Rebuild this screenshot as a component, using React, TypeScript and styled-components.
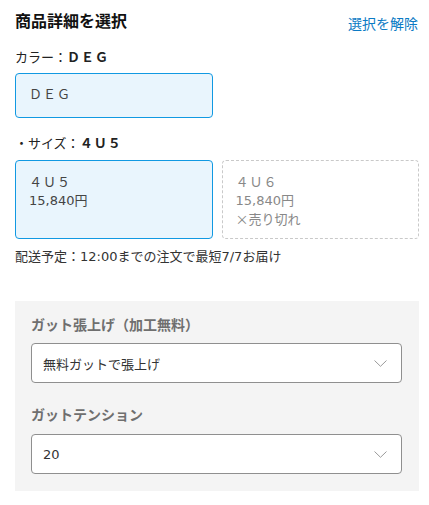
import React from "react";
import styled, { createGlobalStyle } from "styled-components";

const Global = createGlobalStyle`
  html, body { margin: 0; padding: 0; background: #fff; }
  body { font-family: "DejaVu Sans", "Noto Sans CJK JP", sans-serif; color: #222; }
  * { box-sizing: border-box; }
`;

const Page = styled.div`
  width: 429px;
  padding: 11px 10px 14px 15px;
`;

const Header = styled.div`
  display: flex;
  justify-content: space-between;
  align-items: center;
  height: 22px;
`;

const Title = styled.h2`
  margin: 0;
  font-size: 16px;
  line-height: 22px;
  font-weight: 700;
  color: #111;
`;

const ClearLink = styled.a`
  font-size: 14px;
  line-height: 22px;
  color: #0b7ac4;
  text-decoration: none;
  margin-right: 1px;
  padding-top: 3px;
`;

const FieldLabel = styled.div<{ $top: number }>`
  margin-top: ${(p) => p.$top}px;
  font-size: 13px;
  line-height: 20px;
  height: 20px;
  color: #222;
  b { font-weight: 700; letter-spacing: 1px; }
`;

const OptionGrid = styled.div<{ $cols: number; $top: number }>`
  display: grid;
  grid-template-columns: repeat(${(p) => p.$cols}, 1fr);
  column-gap: 9px;
  margin-top: ${(p) => p.$top}px;
`;

const OptionBox = styled.div<{ $selected?: boolean; $soldOut?: boolean; $h: number }>`
  height: ${(p) => p.$h}px;
  border-radius: 4px;
  border: 1px ${(p) => (p.$soldOut ? "dashed #c9c9c9" : "solid #1199e2")};
  background: ${(p) => (p.$selected ? "#e9f5fd" : "#fff")};
  padding: ${(p) => (p.$h < 50 ? "12px 13px" : "13px 13px")};
  color: ${(p) => (p.$soldOut ? "#888" : "#444")};
  font-size: 13px;
  line-height: 18px;
`;

const OptionName = styled.div`
  letter-spacing: 1px;
`;

const CrossMark = styled.span`
  font-family: "Noto Sans CJK JP", sans-serif;
`;

const Delivery = styled.div`
  margin-top: 9px;
  font-size: 13px;
  line-height: 18px;
  color: #333;
`;

const Panel = styled.div`
  margin-top: 35px;
  background: #f4f4f4;
  padding: 14px 17px 17px 16px;
`;

const PanelLabel = styled.div<{ $top: number }>`
  margin-top: ${(p) => p.$top}px;
  font-size: 14px;
  line-height: 20px;
  height: 20px;
  font-weight: 700;
  color: #6f6f6f;
`;

const SelectBox = styled.div<{ $top: number }>`
  margin-top: ${(p) => p.$top}px;
  height: 40px;
  background: #fff;
  border: 1px solid #8f8f8f;
  border-radius: 4px;
  display: flex;
  align-items: center;
  justify-content: space-between;
  padding: 0 14px 0 11px;
  font-size: 13px;
  color: #333;
`;

const Chevron = () => (
  <svg width="13" height="7" viewBox="0 0 13 7" fill="none">
    <path d="M0.5 0.5 L6.5 6.3 L12.5 0.5" stroke="#9a9a9a" strokeWidth="1" />
  </svg>
);

export default function App() {
  return (
    <Page>
      <Global />
      <Header>
        <Title>商品詳細を選択</Title>
        <ClearLink href="#">選択を解除</ClearLink>
      </Header>

      <FieldLabel $top={15}>
        カラー：<b>ＤＥＧ</b>
      </FieldLabel>
      <OptionGrid $cols={2} $top={5}>
        <OptionBox $selected $h={45}>
          <OptionName>ＤＥＧ</OptionName>
        </OptionBox>
      </OptionGrid>

      <FieldLabel $top={16}>
        ・サイズ：<b>４Ｕ５</b>
      </FieldLabel>
      <OptionGrid $cols={2} $top={6}>
        <OptionBox $selected $h={79}>
          <OptionName>４Ｕ５</OptionName>
          <div>15,840円</div>
        </OptionBox>
        <OptionBox $soldOut $h={79}>
          <OptionName>４Ｕ６</OptionName>
          <div>15,840円</div>
          <div>
            <CrossMark>×</CrossMark>売り切れ
          </div>
        </OptionBox>
      </OptionGrid>

      <Delivery>配送予定：12:00までの注文で最短7/7お届け</Delivery>

      <Panel>
        <PanelLabel $top={0}>ガット張上げ（加工無料）</PanelLabel>
        <SelectBox $top={8}>
          <span>無料ガットで張上げ</span>
          <Chevron />
        </SelectBox>
        <PanelLabel $top={22}>ガットテンション</PanelLabel>
        <SelectBox $top={9}>
          <span>20</span>
          <Chevron />
        </SelectBox>
      </Panel>
    </Page>
  );
}
